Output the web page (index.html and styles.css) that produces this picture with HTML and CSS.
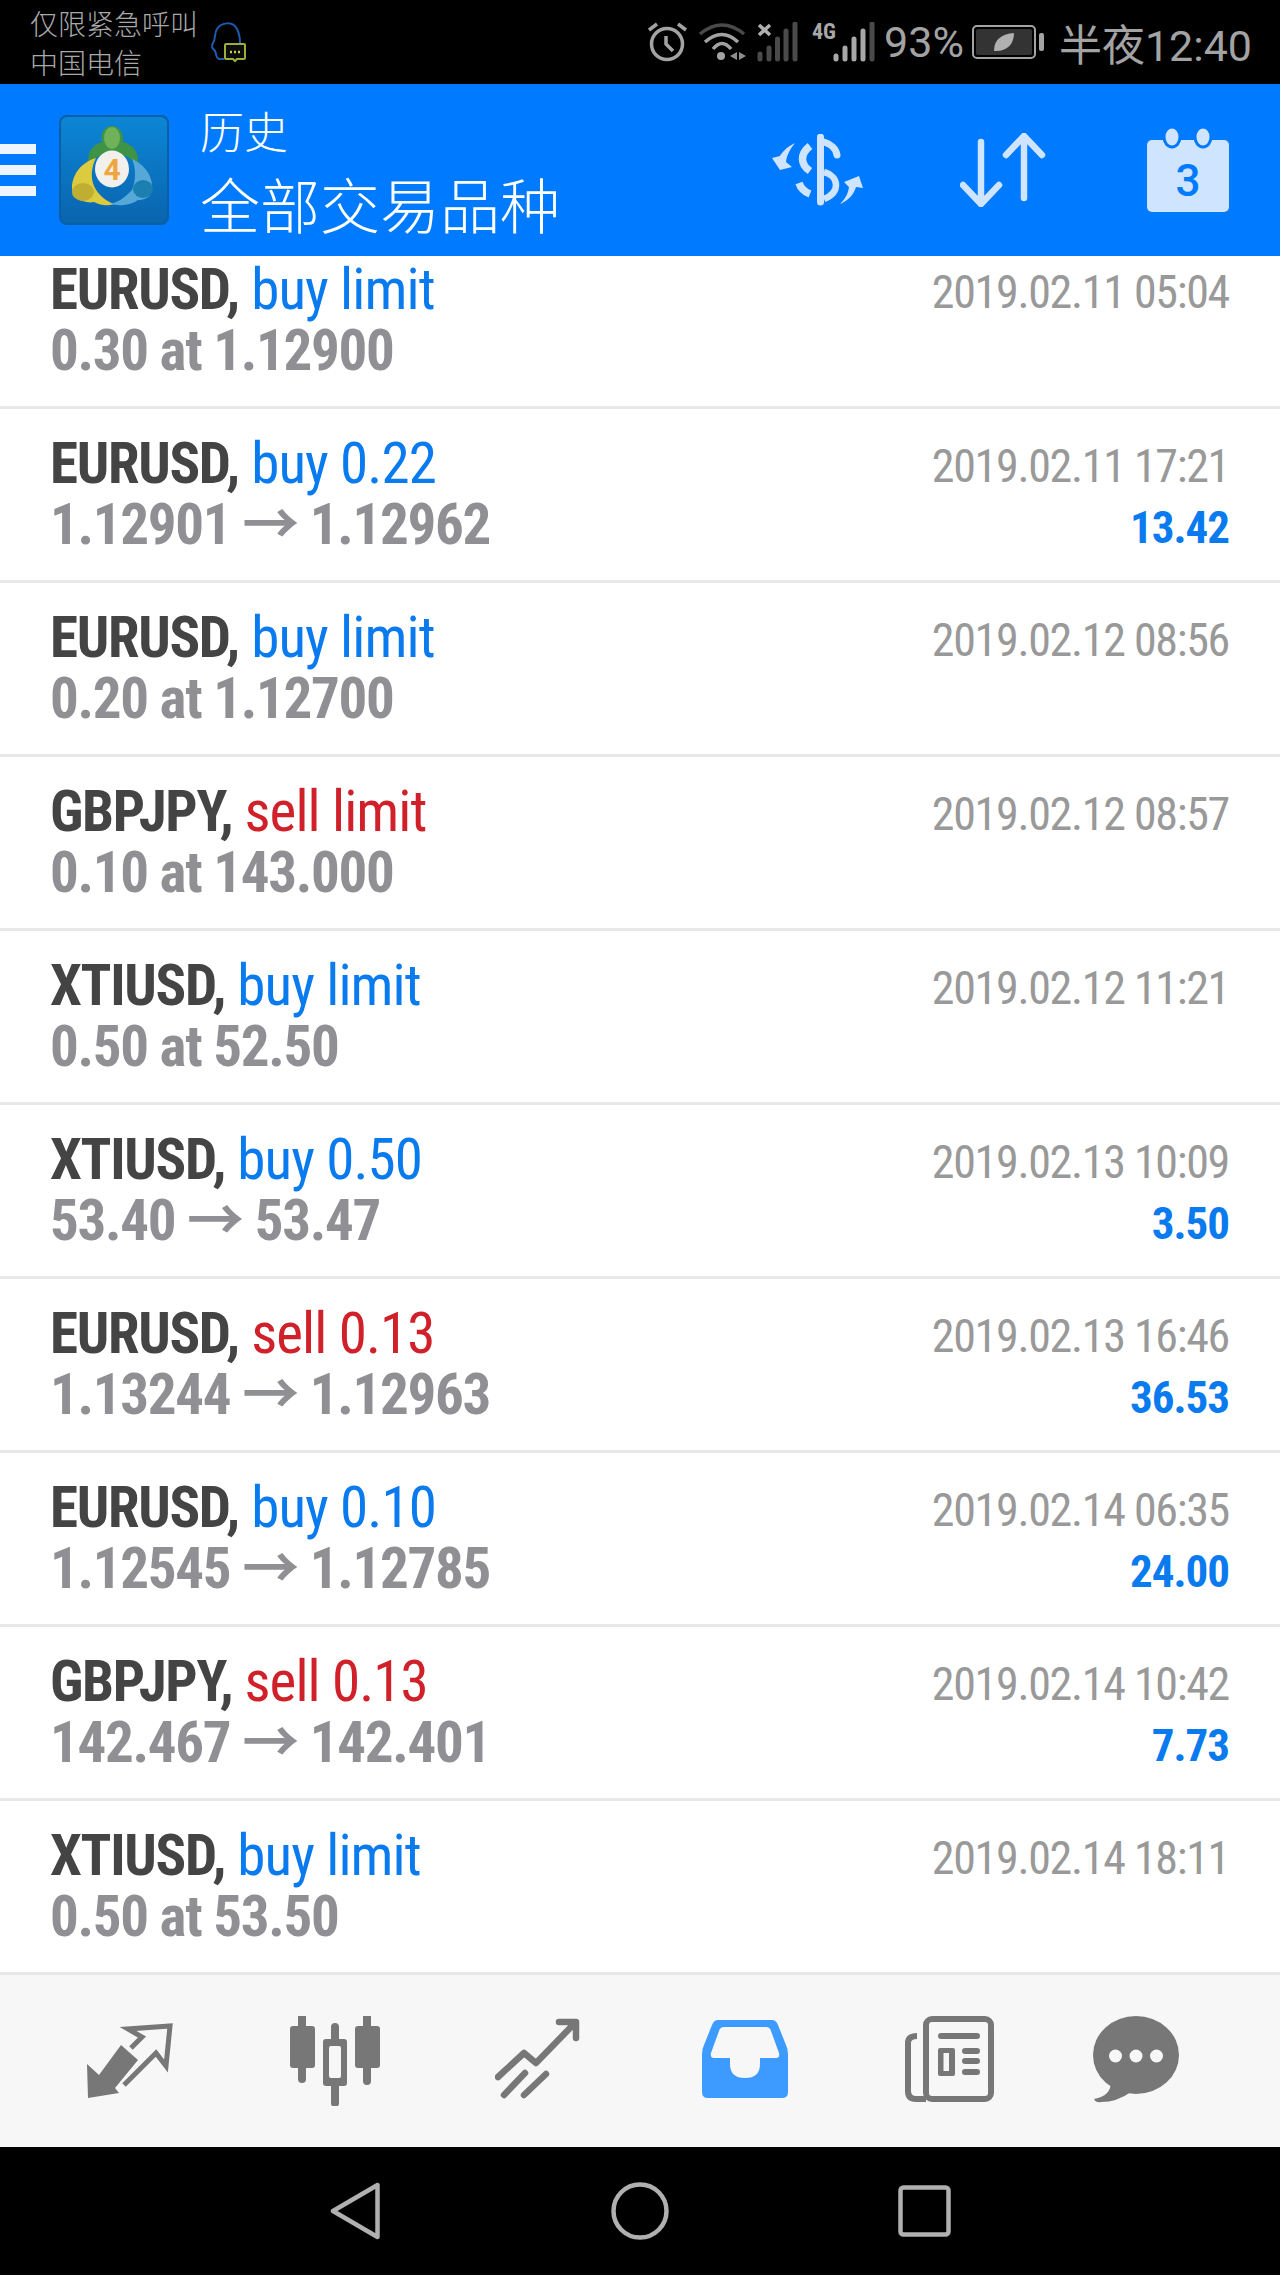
FILE: index.html
```html
<!DOCTYPE html>
<html lang="zh-CN">
    <head>
        <meta charset="UTF-8">
        <title>历史</title>
        <link rel="stylesheet" href="styles.css">
    </head>
    <body>
        <div class="statusbar">
            <div class="carrier">
                <div>仅限紧急呼叫</div>
                <div>中国电信</div>
            </div>
            <svg class="qq-icon" width="38" height="42" viewBox="0 0 38 42">
                <path d="M15 38 H10 C6 36 8 34 6 30 C3 27 2 26 4 22 C7 18 5 12 8 8 C12 1 24 0 28 8 C30 12 31 17 31 22" fill="none" stroke="#1e5bb0" stroke-width="2"/>
                <path d="M17 23 H35 Q36 23 36 24 V37 Q36 38 35 38 H28 L26 40 L24 38 H17 Q16 38 16 37 V24 Q16 23 17 23 Z" fill="#0c0c0c" stroke="#9ab038" stroke-width="2"/>
                <path d="M21 31 h2 M25 31 h2 M29 31 h2" stroke="#c4d050" stroke-width="2.500"/>
            </svg>
            <div class="status-right">
                <svg width="40" height="40" viewBox="0 0 40 40">
                    <circle cx="19" cy="22" r="15.500" fill="none" stroke="#a3a3a3" stroke-width="3.500"/>
                    <path d="M18 14 V22 L25 29" fill="none" stroke="#a3a3a3" stroke-width="3.500"/>
                    <path d="M1 8 L9 2 M30 2 L38 8" fill="none" stroke="#a3a3a3" stroke-width="3.500"/>
                </svg>
                <svg class="st-wifi" width="50" height="40" viewBox="0 0 50 40">
                    <path d="M3 12 Q25 -6 47 12" fill="none" stroke="#4a4a4a" stroke-width="3.500"/>
                    <path d="M8 20 Q25 5 41 20 M16 27 Q25 16 34 27" fill="none" stroke="#a3a3a3" stroke-width="3.500"/>
                    <circle cx="24" cy="34" r="4" fill="#a3a3a3"/>
                    <path d="M40 30 V38 L33 34 Z M42 30 V38 L49 34 Z" fill="#8f8f8f"/>
                </svg>
                <svg class="st-signal" width="41" height="40" viewBox="0 0 41 40">
                    <path d="M3 32 V37 M12 26 V37 M20.500 17 V37 M29 9 V37 M38 2 V37" fill="none" stroke="#4a4a4a" stroke-width="5" stroke-linecap="round"/>
                    <path d="M2 3 L13 13 M13 3 L2 13" stroke="#b0b0b0" stroke-width="3.500"/>
                </svg>
                <svg class="st-signal4g" width="63" height="40" viewBox="0 0 63 40">
                    <text x="0" y="17" class="st-small">4G</text>
                    <path d="M24 34 V37 M33 26 V37 M42 17 V37 M51 9 V37" fill="none" stroke="#a8a8a8" stroke-width="5" stroke-linecap="round"/>
                    <path d="M60 2 V37" fill="none" stroke="#4a4a4a" stroke-width="5" stroke-linecap="round"/>
                </svg>
                <span class="st-percent">93%</span>
                <svg class="st-battery" width="72" height="34" viewBox="0 0 72 34">
                    <rect x="1" y="1" width="62" height="32" rx="4" fill="none" stroke="#a3a3a3" stroke-width="2"/>
                    <rect x="4" y="4" width="56" height="26" rx="2" fill="#333"/>
                    <path d="M22 26 C22 14 30 9 42 8 C42 20 34 27 22 26 Z" fill="#b0b0b0"/>
                    <rect x="67" y="8" width="5" height="18" rx="2" fill="#a3a3a3"/>
                </svg>
                <span class="st-clock">半夜12:40</span>
            </div>
        </div>

        <div class="header">
            <div class="burger"><span></span><span></span><span></span></div>
            <svg class="logo" width="110" height="110" viewBox="-1 -1 110 110">
                <defs>
                    <linearGradient id="logobg" x1="0" y1="0" x2="0" y2="1">
                        <stop offset="0" stop-color="#0b86d6"/>
                        <stop offset="1" stop-color="#0a64ae"/>
                    </linearGradient>
                </defs>
                <rect width="108" height="108" rx="7" fill="url(#logobg)" stroke="#0a5fa6" stroke-width="2"/>
                <path d="M52 10 C60 10 64 18 63 26 C72 28 80 36 78 50 C72 42 62 37 52 37 C42 37 34 42 29 48 C26 36 34 28 42 26 C40 18 44 10 52 10 Z" fill="#3f9345"/>
                <ellipse cx="52" cy="22" rx="8" ry="11" fill="#70b25a"/>
                <path d="M36 42 C22 46 12 58 12 72 C12 82 24 88 34 86 C42 90 48 90 54 88 C44 84 38 78 34 70 C30 60 32 50 36 42 Z" fill="#dccb3e"/>
                <ellipse cx="23" cy="76" rx="11" ry="9" fill="#bfae32"/>
                <path d="M72 43 C84 48 93 60 92 72 C92 82 84 84 78 84 C70 90 58 90 50 88 C60 86 66 80 72 74 C76 64 76 52 72 43 Z" fill="#55a8d8"/>
                <ellipse cx="83" cy="73" rx="10" ry="9" fill="#1b7fb0"/>
                <ellipse cx="52" cy="53" rx="17" ry="18.500" fill="#f1f0ec"/>
                <text x="52" y="64" class="logo-four">4</text>
            </svg>
            <div class="titles">
                <div class="title-small">历史</div>
                <div class="title-big">全部交易品种</div>
            </div>
            <div class="header-icons">
                <svg width="93" height="72" viewBox="0 0 93 72">
                    <path d="M49.500 3 V68" fill="none" stroke="#cfe4ff" stroke-width="7" stroke-linecap="round"/>
                    <path d="M53 8 C60 10 65 15 66 21" fill="none" stroke="#cfe4ff" stroke-width="7" stroke-linecap="round"/>
                    <path d="M39 12 C29 20 29 30 39 37 M28 49 C30 55 34 58 39 60" fill="none" stroke="#cfe4ff" stroke-width="7.500"/>
                    <path d="M53 38 C68 42 70 58 53 65" fill="none" stroke="#cfe4ff" stroke-width="6.500"/>
                    <path d="M24 9 C15 13 10 20 9 22 L1 24 L9 36 L21 33 L15 28 C16 20 20 14 24 9 Z" fill="#cfe4ff"/>
                    <path d="M69 70 C78 66 83 60 85 53 L92 54 L88 42 L73 48 L78 53 C77 60 74 65 69 70 Z" fill="#cfe4ff"/>
                </svg>
                <svg width="86" height="74" viewBox="0 0 86 74">
                    <path d="M21 9 V71 M3 52 L21 71 L39 52 M64 3 V65 M46 22 L64 3 L82 22" fill="none" stroke="#cfe4ff" stroke-width="6.500" stroke-linecap="round" stroke-linejoin="round"/>
                </svg>
                <svg class="calendar" width="82" height="84" viewBox="0 0 82 84">
                    <rect x="0" y="12" width="82" height="72" rx="5" fill="#cfe4ff"/>
                    <ellipse cx="25" cy="9" rx="8" ry="10" fill="#cfe4ff" stroke="#007aff" stroke-width="3"/>
                    <ellipse cx="56" cy="9" rx="8" ry="10" fill="#cfe4ff" stroke="#007aff" stroke-width="3"/>
                    <text x="41" y="68" class="calendar-day">3</text>
                </svg>
            </div>
        </div>

        <div class="list">
            <div class="row first">
                <div>
                    <div class="line"><span class="symbol">EURUSD,</span> <span class="buy">buy limit</span></div>
                    <div class="line price">0.30 at 1.12900</div>
                </div>
                <div class="side">
                    <div class="date">2019.02.11 05:04</div>
                </div>
            </div>
            <div class="row">
                <div>
                    <div class="line"><span class="symbol">EURUSD,</span> <span class="buy">buy 0.22</span></div>
                    <div class="line price">1.12901 → 1.12962</div>
                </div>
                <div class="side">
                    <div class="date">2019.02.11 17:21</div>
                    <div class="profit">13.42</div>
                </div>
            </div>
            <div class="row">
                <div>
                    <div class="line"><span class="symbol">EURUSD,</span> <span class="buy">buy limit</span></div>
                    <div class="line price">0.20 at 1.12700</div>
                </div>
                <div class="side">
                    <div class="date">2019.02.12 08:56</div>
                </div>
            </div>
            <div class="row">
                <div>
                    <div class="line"><span class="symbol">GBPJPY,</span> <span class="sell">sell limit</span></div>
                    <div class="line price">0.10 at 143.000</div>
                </div>
                <div class="side">
                    <div class="date">2019.02.12 08:57</div>
                </div>
            </div>
            <div class="row">
                <div>
                    <div class="line"><span class="symbol">XTIUSD,</span> <span class="buy">buy limit</span></div>
                    <div class="line price">0.50 at 52.50</div>
                </div>
                <div class="side">
                    <div class="date">2019.02.12 11:21</div>
                </div>
            </div>
            <div class="row">
                <div>
                    <div class="line"><span class="symbol">XTIUSD,</span> <span class="buy">buy 0.50</span></div>
                    <div class="line price">53.40 → 53.47</div>
                </div>
                <div class="side">
                    <div class="date">2019.02.13 10:09</div>
                    <div class="profit">3.50</div>
                </div>
            </div>
            <div class="row">
                <div>
                    <div class="line"><span class="symbol">EURUSD,</span> <span class="sell">sell 0.13</span></div>
                    <div class="line price">1.13244 → 1.12963</div>
                </div>
                <div class="side">
                    <div class="date">2019.02.13 16:46</div>
                    <div class="profit">36.53</div>
                </div>
            </div>
            <div class="row">
                <div>
                    <div class="line"><span class="symbol">EURUSD,</span> <span class="buy">buy 0.10</span></div>
                    <div class="line price">1.12545 → 1.12785</div>
                </div>
                <div class="side">
                    <div class="date">2019.02.14 06:35</div>
                    <div class="profit">24.00</div>
                </div>
            </div>
            <div class="row">
                <div>
                    <div class="line"><span class="symbol">GBPJPY,</span> <span class="sell">sell 0.13</span></div>
                    <div class="line price">142.467 → 142.401</div>
                </div>
                <div class="side">
                    <div class="date">2019.02.14 10:42</div>
                    <div class="profit">7.73</div>
                </div>
            </div>
            <div class="row">
                <div>
                    <div class="line"><span class="symbol">XTIUSD,</span> <span class="buy">buy limit</span></div>
                    <div class="line price">0.50 at 53.50</div>
                </div>
                <div class="side">
                    <div class="date">2019.02.14 18:11</div>
                </div>
            </div>
        </div>

        <div class="tabbar">
            <svg width="90" height="90" viewBox="0 0 90 90">
                <path d="M2 48 L14 59 L36 29 L53 44 L30 72 L34 77 L3 82 Z" fill="#777"/>
                <path d="M46 32 L57 21 L43 13 L85 10 L81 50 L71 37 L39 69" fill="none" stroke="#777" stroke-width="5"/>
            </svg>
            <svg width="90" height="90" viewBox="0 0 90 90">
                <path d="M12 0 V63 M45 11 V87 M77 0 V65" stroke="#777" stroke-width="8" stroke-linecap="round" fill="none"/>
                <rect x="0" y="10" width="25" height="42" rx="3" fill="#777"/>
                <rect x="33" y="23" width="24" height="47" rx="3" fill="#777"/>
                <rect x="39" y="30" width="12" height="32" rx="2" fill="#f7f7f7"/>
                <rect x="65" y="10" width="25" height="42" rx="3" fill="#777"/>
            </svg>
            <svg width="90" height="90" viewBox="0 0 90 90">
                <path d="M3 61 L29 37 L41 47 L76 11 M64 6 H81 V22" fill="none" stroke="#777" stroke-width="6.500" stroke-linecap="round" stroke-linejoin="round"/>
                <path d="M9 79 L30 57 M29 79 L51 58" fill="none" stroke="#777" stroke-width="6.500" stroke-linecap="round"/>
            </svg>
            <svg width="90" height="90" viewBox="0 0 90 90">
                <path fill-rule="evenodd" transform="translate(2 4)" d="M16 0 H70 Q74 0 76 5 L84 25 Q86 29 86 34 V72 Q86 78 80 78 H6 Q0 78 0 72 V34 Q0 29 2 25 L10 5 Q12 0 16 0 Z M22 7 H64 Q68 7 69 11 L77 33 Q78 38 74 38 H58 V44 Q58 58 43 58 Q28 58 28 44 V38 H12 Q8 38 9 33 L17 11 Q18 7 22 7 Z" fill="#3d9bff"/>
            </svg>
            <svg width="90" height="90" viewBox="0 0 90 90">
                <rect x="21" y="3" width="65" height="80" rx="6" fill="none" stroke="#777" stroke-width="6"/>
                <path d="M12 20 Q3 20 3 27 V75 Q3 83 11 83 H21" fill="none" stroke="#777" stroke-width="6"/>
                <path d="M36 20 H72 M60 35 H72 M60 45 H72 M60 56 H72" stroke="#777" stroke-width="6" stroke-linecap="round"/>
                <rect x="33" y="32" width="17" height="28" rx="2" fill="#777"/>
                <rect x="38.500" y="37" width="5.500" height="18" fill="#f7f7f7"/>
            </svg>
            <svg class="chat-icon" width="90" height="90" viewBox="0 0 90 90">
                <ellipse cx="43" cy="39" rx="43" ry="39" fill="#777"/>
                <path d="M18 66 Q18 80 1 83 Q3 87 8 86 Q24 86 38 76 Z" fill="#777"/>
                <circle cx="22.500" cy="40" r="6.500" fill="#f7f7f7"/>
                <circle cx="43" cy="40" r="6.500" fill="#f7f7f7"/>
                <circle cx="63.500" cy="40" r="6.500" fill="#f7f7f7"/>
            </svg>
        </div>

        <div class="navbar">
            <svg width="50" height="58" viewBox="0 0 50 58">
                <path d="M47.500 3 V55 L3 29 Z" fill="none" stroke="#b0b0b0" stroke-width="4.500" stroke-linejoin="round"/>
            </svg>
            <svg width="58" height="58" viewBox="0 0 58 58">
                <circle cx="29" cy="29" r="26.500" fill="none" stroke="#b0b0b0" stroke-width="4.500"/>
            </svg>
            <svg class="nav-square" width="53" height="52" viewBox="0 0 53 52">
                <rect x="2.500" y="2.500" width="48" height="47" rx="3" fill="none" stroke="#b0b0b0" stroke-width="4.500"/>
            </svg>
        </div>
    </body>
</html>
```

FILE: styles.css
```css
body {
    margin: 0;
    height: 2276px;
    font-family: "Roboto Condensed", Roboto, "Noto Sans CJK SC", sans-serif;
    background: white;
}

/* status bar */
.statusbar {
    height: 84px;
    background: black;
    color: #a3a3a3;
    display: flex;
    align-items: center;
    padding: 0 28px 0 30px;
    font-family: Roboto, "Noto Sans CJK SC", sans-serif;
}

.carrier {
    font-size: 28px;
    line-height: 39px;
    padding-top: 2px;
    font-family: "Noto Sans CJK SC", sans-serif;
    font-weight: 300;
    color: #a8a8a8;
}

.qq-icon {
    margin-left: 11px;
}

.status-right {
    margin-left: auto;
    display: flex;
    align-items: center;
}

.st-wifi {
    margin-left: 9px;
}

.st-signal {
    margin-left: 10px;
}

.st-signal4g {
    margin-left: 14px;
}

.st-percent {
    font-size: 43px;
    margin-left: 9px;
}

.st-battery {
    margin-left: 8px;
}

.st-clock {
    font-size: 43px;
    margin-left: 15px;
}

.st-small {
    font-size: 22px;
    font-weight: 700;
    font-stretch: 75%;
    fill: #a8a8a8;
}

/* header */
.header {
    height: 172px;
    background: #007aff;
    display: flex;
    align-items: center;
    color: white;
    font-family: "Noto Sans CJK SC", sans-serif;
}

.burger {
    width: 36px;
    display: flex;
    flex-direction: column;
    gap: 11px;
}

.burger span {
    height: 10px;
    background: #eef5ff;
}

.logo {
    margin-left: 23px;
}

.titles {
    margin-left: 31px;
    font-weight: 300;
}

.title-small {
    font-size: 44px;
    line-height: 60px;
}

.title-big {
    font-size: 60px;
    line-height: 76px;
    margin-top: 5px;
}

.header-icons {
    margin-left: auto;
    padding-right: 51px;
    display: flex;
    align-items: center;
    gap: 96px;
}

.calendar {
    margin-left: 5px;
}

.logo-four {
    font-family: Roboto, sans-serif;
    font-size: 30px;
    font-weight: 700;
    text-anchor: middle;
    fill: #f0a640;
}

.calendar-day {
    font-family: Roboto, sans-serif;
    font-size: 44px;
    font-weight: 500;
    text-anchor: middle;
    fill: #007aff;
}

/* history rows */
.row {
    box-sizing: border-box;
    height: 174px;
    padding: 24px 51px 0 50px;
    border-bottom: 3px solid #e8e8e8;
    display: flex;
    justify-content: space-between;
}

.row.first {
    height: 153px;
    padding-top: 3px;
}

.line {
    font-size: 57px;
    line-height: 61px;
    font-stretch: 75%;
    letter-spacing: -0.9px;
    white-space: nowrap;
}

.symbol {
    font-weight: 700;
    letter-spacing: -1.3px;
    color: #444;
}

.buy {
    color: #0a7aef;
}

.sell {
    color: #d0202a;
}

.price {
    font-weight: 700;
    letter-spacing: -1.3px;
    color: #909094;
}

.side {
    text-align: right;
    padding-top: 3px;
}

.date {
    font-size: 46px;
    line-height: 61px;
    font-stretch: 75%;
    letter-spacing: -1.3px;
    color: #999;
    white-space: nowrap;
}

.profit {
    font-size: 45px;
    line-height: 61px;
    font-stretch: 75%;
    letter-spacing: -1px;
    font-weight: 700;
    color: #0a7aef;
}

/* bottom tabs */
.tabbar {
    box-sizing: border-box;
    height: 172px;
    background: #f7f7f7;
    display: flex;
    align-items: center;
    gap: 115px;
    padding-left: 85px;
}

.chat-icon {
    margin-left: -17px;
}

/* android nav */
.navbar {
    height: 128px;
    background: black;
    display: flex;
    align-items: center;
    padding-left: 330px;
    gap: 231px;
}

.nav-square {
    margin-left: -2px;
}
```
